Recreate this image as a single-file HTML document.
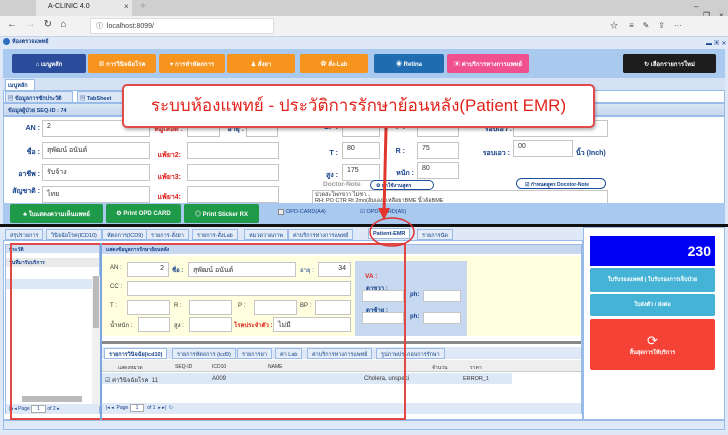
<!DOCTYPE html>
<html><head><meta charset="utf-8"><style>
*{margin:0;padding:0;box-sizing:border-box}
body{width:728px;height:435px;overflow:hidden;position:relative;background:#dfe8f6;font-family:"Liberation Sans","Noto Sans CJK SC",sans-serif;font-size:7px;color:#15428b}
.a{position:absolute}
.btn{position:absolute;color:#fff;font-size:6px;display:flex;align-items:center;justify-content:center;border-radius:2px;font-weight:bold}
.in{position:absolute;background:#fff;border:1px solid #c5c5c5;font-size:7px;color:#333;padding:2px 4px}
.lb{position:absolute;font-weight:bold;font-size:7px;color:#15428b;text-align:right}
.red{color:#e0211c}
.tab{position:absolute;top:229px;height:11px;border:1px solid #99bbe8;background:#e3ecf7;font-size:5.5px;color:#15428b;padding:2px 4px;white-space:nowrap}
</style></head><body>
<!-- browser chrome -->
<div class="a" style="left:0;top:0;width:728px;height:16px;background:#cfcfcf"></div>
<div class="a" style="left:36px;top:0;width:96px;height:16px;background:#e8e8e8"></div>
<div class="a" style="left:48px;top:3px;font-size:7px;color:#222">A-CLINIC 4.0</div>
<div class="a" style="left:124px;top:2px;font-size:8px;color:#444">×</div>
<div class="a" style="left:140px;top:1px;font-size:10px;color:#999">+</div>
<div class="a" style="left:694px;top:2px;font-size:8px;color:#333">–&nbsp;&nbsp;&nbsp;&nbsp;❐&nbsp;&nbsp;&nbsp;&nbsp;×</div>
<div class="a" style="left:0;top:16px;width:728px;height:20px;background:#f2f2f2"></div>
<div class="a" style="left:7px;top:19px;font-size:10px;color:#444">←&nbsp;&nbsp;&nbsp;<span style="color:#bbb">→</span>&nbsp;&nbsp;&nbsp;↻&nbsp;&nbsp;&nbsp;⌂</div>
<div class="a" style="left:90px;top:18px;width:184px;height:16px;background:#fff;border:1px solid #ddd"></div>
<div class="a" style="left:96px;top:21px;font-size:7px;color:#444">ⓘ&nbsp;&nbsp;localhost:8099/</div>
<div class="a" style="left:610px;top:20px;font-size:8px;color:#444">☆&nbsp;&nbsp;&nbsp;&nbsp;&nbsp;≡&nbsp;&nbsp;&nbsp;&nbsp;✎&nbsp;&nbsp;&nbsp;&nbsp;⇪&nbsp;&nbsp;&nbsp;&nbsp;···</div>
<!-- app title -->
<div class="a" style="left:0;top:36px;width:728px;height:12px;background:#dfe8f6;border-top:1px solid #c3d3ea"></div>
<div class="a" style="left:3px;top:38px;width:7px;height:7px;border-radius:50%;background:#2d6fbf"></div>
<div class="a" style="left:12px;top:38px;font-size:5.5px;font-weight:bold">ห้องตรวจแพทย์</div>
<div class="a" style="left:706px;top:38px;font-size:6px;color:#15428b">▬ ▣ ✕</div>
<!-- button bar -->
<div class="a" style="left:3px;top:49px;width:722px;height:29px;background:#a9c9ee"></div>
<div class="btn" style="left:12px;top:54px;width:74px;height:19px;background:#2b4c9b">⌂ เมนูหลัก</div>
<div class="btn" style="left:88px;top:54px;width:68px;height:19px;background:#f7941d">▦ การวินิจฉัยโรค</div>
<div class="btn" style="left:159px;top:54px;width:66px;height:19px;background:#f7941d">♥ การทำหัตถการ</div>
<div class="btn" style="left:227px;top:54px;width:68px;height:19px;background:#f7941d">♟ สั่งยา</div>
<div class="btn" style="left:300px;top:54px;width:68px;height:19px;background:#f7941d">✿ สั่ง-Lab</div>
<div class="btn" style="left:374px;top:54px;width:70px;height:19px;background:#1f6db0">◉ Retina</div>
<div class="btn" style="left:447px;top:54px;width:82px;height:19px;background:#f0508d">▣ ค่าบริการทางการแพทย์</div>
<div class="btn" style="left:623px;top:54px;width:93px;height:19px;background:#1d1d1d">↻ เลือกรายการใหม่</div>
<!-- tabs -->
<div class="a" style="left:3px;top:78px;width:722px;height:12px;background:#d5e2f4"></div>
<div class="a" style="left:5px;top:79px;width:30px;height:12px;background:#fff;border:1px solid #99bbe8;font-size:5.5px;font-weight:bold;padding:2px">เมนูหลัก</div>
<div class="a" style="left:3px;top:90px;width:722px;height:13px;background:#fff;border:1px solid #99bbe8"></div>
<div class="a" style="left:5px;top:91px;width:68px;height:12px;background:#dde8f6;border:1px solid #99bbe8;font-size:5.5px;font-weight:bold;padding:2px">▤ ข้อมูลการซักประวัติ</div>
<div class="a" style="left:77px;top:91px;width:50px;height:12px;background:#dde8f6;border:1px solid #99bbe8;font-size:5.5px;font-weight:bold;padding:2px">▤ TabSheet</div>
<div class="a" style="left:3px;top:103px;width:722px;height:13px;background:linear-gradient(#dce7f5,#c6d7ef);border:1px solid #99bbe8;font-size:5.5px;font-weight:bold;padding:3px 4px">ข้อมูลผู้ป่วย SEQ-ID : 74</div>
<!-- form -->
<div class="a" style="left:3px;top:116px;width:722px;height:88px;background:#fff;border:1px solid #99bbe8"></div>
<div class="lb" style="left:10px;top:125px;width:30px">AN :</div>
<div class="in" style="left:42px;top:120px;width:108px;height:17px">2</div>
<div class="lb" style="left:10px;top:147px;width:30px">ชื่อ :</div>
<div class="in" style="left:42px;top:142px;width:108px;height:17px">สุพัฒน์ อนันต์</div>
<div class="lb" style="left:4px;top:169px;width:36px">อาชีพ :</div>
<div class="in" style="left:42px;top:164px;width:108px;height:17px">รับจ้าง</div>
<div class="lb" style="left:2px;top:186px;width:38px">สัญชาติ :</div>
<div class="in" style="left:42px;top:186px;width:108px;height:17px">ไทย</div>
<div class="lb red" style="left:150px;top:124px;width:33px">หมู่เลือด :</div>
<div class="in" style="left:187px;top:120px;width:33px;height:17px">0</div>
<div class="lb" style="left:222px;top:124px;width:22px">อายุ :</div>
<div class="in" style="left:246px;top:120px;width:32px;height:17px">34</div>
<div class="lb red" style="left:150px;top:150px;width:31px">แพ้ยา2:</div>
<div class="in" style="left:187px;top:142px;width:92px;height:17px"></div>
<div class="lb red" style="left:150px;top:172px;width:31px">แพ้ยา3:</div>
<div class="in" style="left:187px;top:164px;width:92px;height:17px"></div>
<div class="lb red" style="left:150px;top:192px;width:31px">แพ้ยา4:</div>
<div class="in" style="left:187px;top:186px;width:92px;height:17px"></div>
<div class="lb" style="left:318px;top:124px;width:20px">BP :</div>
<div class="in" style="left:342px;top:120px;width:38px;height:17px">60/110</div>
<div class="lb" style="left:318px;top:150px;width:20px">T :</div>
<div class="in" style="left:342px;top:142px;width:38px;height:17px">80</div>
<div class="lb" style="left:318px;top:170px;width:20px">สูง :</div>
<div class="in" style="left:342px;top:164px;width:38px;height:17px">175</div>
<div class="lb" style="left:385px;top:124px;width:20px">P :</div>
<div class="in" style="left:417px;top:120px;width:42px;height:17px">75</div>
<div class="lb" style="left:385px;top:148px;width:20px">R :</div>
<div class="in" style="left:417px;top:142px;width:42px;height:17px">75</div>
<div class="lb" style="left:392px;top:168px;width:22px">หนัก :</div>
<div class="in" style="left:417px;top:162px;width:42px;height:17px">80</div>
<div class="lb" style="left:462px;top:124px;width:50px">รอบเอว :</div>
<div class="in" style="left:513px;top:120px;width:95px;height:17px"></div>
<div class="lb" style="left:462px;top:148px;width:48px">รอบเอว :</div>
<div class="in" style="left:513px;top:140px;width:60px;height:17px">00</div>
<div class="lb" style="left:576px;top:148px;width:40px;text-align:left">นิ้ว (Inch)</div>
<div class="a" style="left:323px;top:181px;font-size:6.5px;color:#999;font-weight:bold">Doctor-Note</div>
<div class="a" style="left:370px;top:180px;width:64px;height:10px;border:1px solid #1b4f9b;border-radius:6px;font-size:5px;font-weight:bold;padding:1px 5px">⚙ ยกใช้งานสูตร</div>
<div class="a" style="left:516px;top:178px;width:90px;height:11px;border:1px solid #1b4f9b;border-radius:6px;font-size:5px;font-weight:bold;padding:2px 8px">☑ กำหนดสูตร Docotor-Note</div>
<div class="a" style="left:312px;top:190px;width:296px;height:14px;border:1px solid #c5c5c5;background:#fff;font-size:5.5px;color:#333;line-height:6px;padding:1px 2px;overflow:hidden">ปวดสะโพกขวา ไม่ชา...<br>RH: PO CTR Rt 2mo(ล้มเอง) เหลือยาBME นิ้วล้อBME</div>
<!-- green bar -->
<div class="a" style="left:3px;top:203px;width:722px;height:21px;background:#a9c9ee"></div>
<div class="btn" style="left:10px;top:204px;width:93px;height:19px;background:#1e9a48">♣ ใบแสดงความเห็นแพทย์</div>
<div class="btn" style="left:106px;top:204px;width:75px;height:19px;background:#1e9a48">⚙ Print OPD CARD</div>
<div class="btn" style="left:184px;top:204px;width:75px;height:19px;background:#1e9a48">◎ Print Sticker RX</div>
<div class="a" style="left:278px;top:209px;width:6px;height:6px;border:1px solid #888;background:#eee"></div>
<div class="a" style="left:286px;top:209px;font-size:5.5px;color:#15428b">OPD-CARD(A4)</div>
<div class="a" style="left:360px;top:209px;font-size:5.5px;color:#15428b">☑ OPD-CARD(A5)</div>
<div class="a" style="left:0;top:224px;width:728px;height:3px;background:#111"></div>
<!-- tab row -->
<div class="a" style="left:3px;top:227px;width:580px;height:14px;background:#dfe8f6"></div>
<div class="tab" style="left:5px">สรุปรายการ</div>
<div class="tab" style="left:46px">วินิจฉัยโรค(ICD10)</div>
<div class="tab" style="left:102px">หัตถการ(ICD9)</div>
<div class="tab" style="left:146px">รายการ-สั่งยา</div>
<div class="tab" style="left:192px">รายการ-สั่งLab</div>
<div class="tab" style="left:244px">หมวดวาดภาพ</div>
<div class="tab" style="left:288px">ค่าบริการทางการแพทย์</div>
<div class="tab" style="left:368px;background:#fff;font-weight:bold;top:228px">Patient-EMR</div>
<div class="tab" style="left:417px">รายการนัด</div>
<!-- main -->
<div class="a" style="left:3px;top:240px;width:580px;height:180px;background:#fff;border:1px solid #99bbe8"></div>
<div class="a" style="left:5px;top:244px;width:95px;height:170px;background:#fff;border:1px solid #99bbe8"></div>
<div class="a" style="left:6px;top:245px;width:93px;height:8px;background:#d3e1f3;font-size:5px;padding:1px 3px;font-weight:bold">ประวัติ</div>
<div class="a" style="left:6px;top:258px;width:93px;height:9px;background:#eaeaea;font-size:5px;padding:1px 3px;font-weight:bold">วันที่มารับบริการ</div>
<div class="a" style="left:6px;top:279px;width:87px;height:10px;background:#dde8f6"></div>
<div class="a" style="left:92px;top:276px;width:8px;height:130px;background:#f0f0f0"></div>
<div class="a" style="left:93px;top:276px;width:6px;height:52px;background:#bbb"></div>
<div class="a" style="left:22px;top:396px;width:60px;height:6px;background:#bbb"></div>
<div class="a" style="left:6px;top:404px;width:93px;height:10px;background:#dfe8f6;font-size:5px;padding:2px 3px">|◂ ◂ Page <span style="background:#fff;border:1px solid #aaa;padding:0 5px">1</span> of 2 ▸</div>
<div class="a" style="left:101px;top:244px;width:481px;height:170px;background:#fff;border:1px solid #99bbe8"></div>
<div class="a" style="left:102px;top:245px;width:479px;height:9px;background:#c6d7ef;font-size:5px;padding:1px 4px;font-weight:bold">แสดงข้อมูลการรักษาย้อนหลัง</div>
<div class="a" style="left:102px;top:256px;width:478px;height:80px;background:#ffffe0"></div>
<div class="a" style="left:355px;top:261px;width:112px;height:76px;background:#c6d9f0"></div>
<div class="a" style="left:110px;top:265px;font-size:6px;color:#333">AN :</div>
<div class="in" style="left:127px;top:262px;width:42px;height:15px;text-align:right">2</div>
<div class="a" style="left:172px;top:265px;font-size:6px;font-weight:bold">ชื่อ :</div>
<div class="in" style="left:188px;top:262px;width:108px;height:15px">สุพัฒน์ อนันต์</div>
<div class="a" style="left:300px;top:265px;font-size:6px">อายุ :</div>
<div class="in" style="left:318px;top:262px;width:33px;height:15px;text-align:right">34</div>
<div class="a" style="left:110px;top:284px;font-size:6px;color:#333">CC :</div>
<div class="in" style="left:127px;top:281px;width:224px;height:15px"></div>
<div class="a" style="left:110px;top:303px;font-size:6px;color:#333">T :</div>
<div class="in" style="left:127px;top:300px;width:43px;height:15px"></div>
<div class="a" style="left:174px;top:303px;font-size:6px;color:#333">R :</div>
<div class="in" style="left:189px;top:300px;width:43px;height:15px"></div>
<div class="a" style="left:238px;top:303px;font-size:6px;color:#333">P :</div>
<div class="in" style="left:254px;top:300px;width:43px;height:15px"></div>
<div class="a" style="left:300px;top:303px;font-size:6px;color:#333">BP :</div>
<div class="in" style="left:315px;top:300px;width:36px;height:15px"></div>
<div class="a" style="left:110px;top:320px;font-size:6px;color:#333">น้ำหนัก :</div>
<div class="in" style="left:138px;top:317px;width:32px;height:15px"></div>
<div class="a" style="left:174px;top:320px;font-size:6px;color:#333">สูง :</div>
<div class="in" style="left:189px;top:317px;width:43px;height:15px"></div>
<div class="a red" style="left:234px;top:320px;font-size:6px;font-weight:bold">โรคประจำตัว :</div>
<div class="in" style="left:273px;top:317px;width:78px;height:15px">ไม่มี</div>
<div class="a red" style="left:365px;top:273px;font-size:6.5px;font-weight:bold">VA :</div>
<div class="a" style="left:366px;top:283px;font-size:6px;font-weight:bold">ตาขวา :</div>
<div class="in" style="left:362px;top:290px;width:42px;height:12px"></div>
<div class="a" style="left:410px;top:292px;font-size:6px;font-weight:bold">ph:</div>
<div class="in" style="left:423px;top:290px;width:38px;height:12px"></div>
<div class="a" style="left:366px;top:305px;font-size:6px;font-weight:bold">ตาซ้าย :</div>
<div class="in" style="left:362px;top:312px;width:42px;height:12px"></div>
<div class="a" style="left:410px;top:314px;font-size:6px;font-weight:bold">ph:</div>
<div class="in" style="left:423px;top:312px;width:38px;height:12px"></div>
<div class="a" style="left:102px;top:336px;width:479px;height:8px;background:#fff;border-bottom:3px solid #888"></div>
<div class="a" style="left:102px;top:347px;width:479px;height:12px;background:#dfe8f6"></div>
<div class="tab" style="left:104px;top:348px;background:#fff;font-weight:bold">รายการวินิจฉัย(icd10)</div>
<div class="tab" style="left:172px;top:348px">รายการหัตถการ (icd9)</div>
<div class="tab" style="left:237px;top:348px">รายการยา</div>
<div class="tab" style="left:275px;top:348px">ค่า Lab</div>
<div class="tab" style="left:307px;top:348px">ค่าบริการทางการแพทย์</div>
<div class="tab" style="left:376px;top:348px">รูปภาพประกอบการรักษา</div>
<div class="a" style="left:102px;top:360px;width:479px;height:12px;background:#eeeeee;border-bottom:1px solid #ccc;font-size:5px;color:#333"></div>
<div class="a" style="left:118px;top:364px;font-size:5px;color:#333">แสดงหมวด</div>
<div class="a" style="left:175px;top:364px;font-size:5px;color:#333">SEQ-ID</div>
<div class="a" style="left:212px;top:364px;font-size:5px;color:#333">ICD10</div>
<div class="a" style="left:268px;top:364px;font-size:5px;color:#333">NAME</div>
<div class="a" style="left:432px;top:364px;font-size:5px;color:#333">จำนวน</div>
<div class="a" style="left:470px;top:364px;font-size:5px;color:#333">ราคา</div>
<div class="a" style="left:102px;top:373px;width:410px;height:11px;background:#dde8f6"></div>
<div class="a" style="left:105px;top:375px;font-size:6px;color:#333">☑ ค่าวินิจฉัยโรค&nbsp;&nbsp;11</div>
<div class="a" style="left:212px;top:376px;font-size:6px;color:#333">A009</div>
<div class="a" style="left:364px;top:376px;font-size:6px;color:#333">Cholera, unspeci</div>
<div class="a" style="left:463px;top:376px;font-size:5.5px;color:#333">ERROR_1</div>
<div class="a" style="left:102px;top:403px;width:479px;height:11px;background:#dfe8f6;font-size:5px;padding:2px 4px">|◂ ◂&nbsp;&nbsp;Page <span style="background:#fff;border:1px solid #aaa;padding:0 5px">1</span>&nbsp;&nbsp;of 1&nbsp;&nbsp;▸ ▸|&nbsp;&nbsp;<span style="color:#2d6fbf">↻</span></div>
<!-- right panel -->
<div class="a" style="left:583px;top:227px;width:142px;height:193px;background:#fff;border:1px solid #99bbe8"></div>
<div class="a" style="left:590px;top:236px;width:125px;height:30px;background:#0000f5;color:#fff;font-size:14px;font-weight:bold;text-align:right;padding:7px 4px">230</div>
<div class="btn" style="left:590px;top:268px;width:125px;height:24px;background:#45b3d6;font-size:5.5px">ใบรับรองแพทย์ | ใบรับรองการเจ็บป่วย</div>
<div class="btn" style="left:590px;top:294px;width:125px;height:22px;background:#45b3d6;font-size:5.5px">ใบส่งตัว / ส่งต่อ</div>
<div class="btn" style="left:590px;top:319px;width:125px;height:51px;background:#f44336;font-size:5.5px;flex-direction:column"><span style="font-size:13px;font-weight:normal">⟳</span>สิ้นสุดการให้บริการ</div>
<div class="a" style="left:3px;top:420px;width:722px;height:10px;background:#dfe8f6;border:1px solid #99bbe8"></div>
<!-- annotations -->
<div class="a" style="left:10px;top:243px;width:396px;height:177px;border:2px solid #e04848"></div>
<div class="a" style="left:100px;top:243px;width:2px;height:177px;background:#7aa6dd"></div>
<svg class="a" style="left:0;top:0" width="728" height="435"><path d="M386 128 L384 214" stroke="#e0362c" stroke-width="3"/><path d="M378 208 L384 220 L390 208 Z" fill="#e0362c"/><ellipse cx="392" cy="232" rx="22" ry="14" fill="none" stroke="#d33" stroke-width="1.5"/></svg>
<div class="a" style="left:122px;top:84px;width:473px;height:44px;background:#fff;border:2px solid #e04a4a;border-radius:5px;box-shadow:1px 2px 3px rgba(0,0,0,.3);color:#e2231a;font-size:17px;text-align:center;line-height:40px;font-family:'Liberation Sans','Noto Sans CJK SC',sans-serif">ระบบห้องแพทย์ - ประวัติการรักษาย้อนหลัง(Patient EMR)</div>
</body></html>
